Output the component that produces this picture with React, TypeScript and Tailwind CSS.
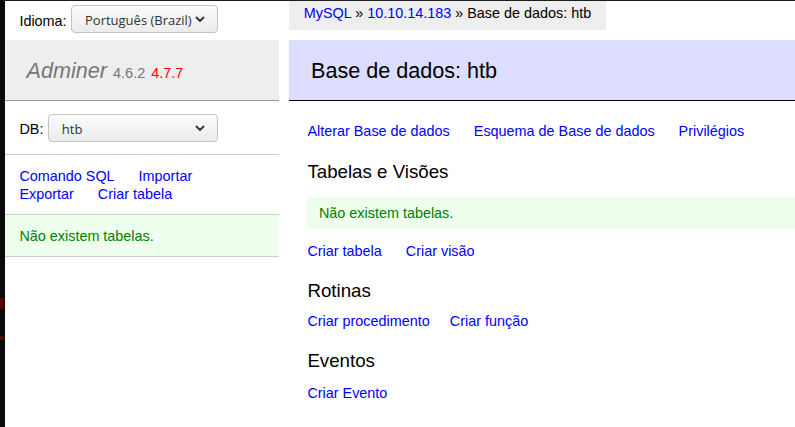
import React from 'react';

// Fake GTK-looking select (the screenshot shows the native Linux widget).
const FakeSelect = ({ value, className }: { value: string; className: string }) => (
  <div
    className={`${className} flex h-[28px] items-center justify-between rounded-[4px] border border-[#c3c3c3] bg-linear-to-b from-[#fbfbfb] to-[#ececec] pt-[1px] pl-[13px] pr-[12px] font-['Open_Sans',sans-serif] text-[13px] leading-[18px] text-[#2e3436]`}
  >
    <span>{value}</span>
    <svg width="10" height="7" viewBox="0 0 10 7" className="shrink-0">
      <polyline points="1.5,1.5 5,5 8.5,1.5" fill="none" stroke="#2e3436" strokeWidth="1.8" strokeLinecap="round" strokeLinejoin="round" />
    </svg>
  </div>
);

const Link = ({ children }: { children: React.ReactNode }) => (
  <a href="#" className="text-[#0000ff] whitespace-nowrap">
    {children}
  </a>
);

export default function App() {
  return (
    <div className="flex min-h-screen w-full overflow-hidden bg-[#1c1c1c] font-['Liberation_Sans',Arial,sans-serif] text-[14.4px] leading-[18px] text-black">
      {/* dark strip of the window behind */}
      <div className="flex w-[5px] shrink-0 flex-col bg-[#0a0a0a]">
        <div className="mt-[298px] h-[11px] w-[4px] bg-[#4f0909]" />
        <div className="mt-[27px] h-[4px] w-[4px] bg-[#4f0909]" />
      </div>

      <div className="mt-[1px] flex flex-1 bg-white">
        {/* sidebar */}
        <aside className="w-[273.6px] shrink-0">
          <div className="flex h-[32px] items-start pl-[14.4px]">
            <span className="mt-[11px]">Idioma:</span>
            <FakeSelect value="Português (Brazil)" className="ml-[4.4px] mt-[4px] w-[147px]" />
          </div>

          <h1 className="mt-[7px] h-[61px] border-b border-[#999] bg-[#eee] px-[21.6px] pt-[18px] text-[21.6px] leading-[26px] font-normal text-[#777] whitespace-nowrap">
            <span className="italic">Adminer</span> <span className="text-[14.47px] leading-none">4.6.2</span>{' '}
            <span className="text-[14.47px] leading-none text-[#ff0000]">4.7.7</span>
          </h1>

          <div className="flex h-[54px] items-start border-b border-[#ccc] pt-[13px] pl-[14.4px]">
            <span className="mt-[6px]">DB:</span>
            <FakeSelect value="htb" className="ml-[4.4px] w-[170px]" />
          </div>

          <div className="flex h-[60px] flex-col border-b border-[#ccc] px-[14.4px] pt-[12px]">
            <div className="flex gap-[24px]">
              <Link>Comando SQL</Link>
              <Link>Importar</Link>
            </div>
            <div className="flex gap-[24px]">
              <Link>Exportar</Link>
              <Link>Criar tabela</Link>
            </div>
          </div>

          <p className="h-[42px] border-b border-[#ccc] bg-[#efe] px-[14.4px] pt-[12px] text-[#008000]">
            Não existem tabelas.
          </p>
        </aside>

        {/* content */}
        <main className="ml-[10.8px] min-w-0 flex-1">
          <div className="flex">
            <div className="h-[28.8px] bg-[#eee] px-[14.4px] leading-[25px] whitespace-nowrap">
              <Link>MySQL</Link> » <Link>10.10.14.183</Link> » Base de dados: htb
            </div>
          </div>

          <h2 className="mt-[10.2px] border-b border-black bg-[#ddf] pl-[21.6px] pt-[18px] pb-[16px] text-[21.6px] leading-[26px] font-normal">
            Base de dados: htb
          </h2>

          <div className="pl-[18px]">
            <div className="mt-[21px] flex gap-[24px]">
              <Link>Alterar Base de dados</Link>
              <Link>Esquema de Base de dados</Link>
              <Link>Privilégios</Link>
            </div>

            <h3 className="mt-[20px] text-[18.72px] leading-[23px] font-normal">Tabelas e Visões</h3>
            <p className="mt-[14px] bg-[#efe] px-[11.52px] py-[7px] text-[#008000]">Não existem tabelas.</p>
            <div className="mt-[13px] flex gap-[24px]">
              <Link>Criar tabela</Link>
              <Link>Criar visão</Link>
            </div>

            <h3 className="mt-[19px] text-[18.72px] leading-[23px] font-normal">Rotinas</h3>
            <div className="mt-[10px] flex gap-[20px]">
              <Link>Criar procedimento</Link>
              <Link>Criar função</Link>
            </div>

            <h3 className="mt-[19px] text-[18.72px] leading-[23px] font-normal">Eventos</h3>
            <div className="mt-[12px] flex gap-[24px]">
              <Link>Criar Evento</Link>
            </div>
          </div>
        </main>
      </div>
    </div>
  );
}
